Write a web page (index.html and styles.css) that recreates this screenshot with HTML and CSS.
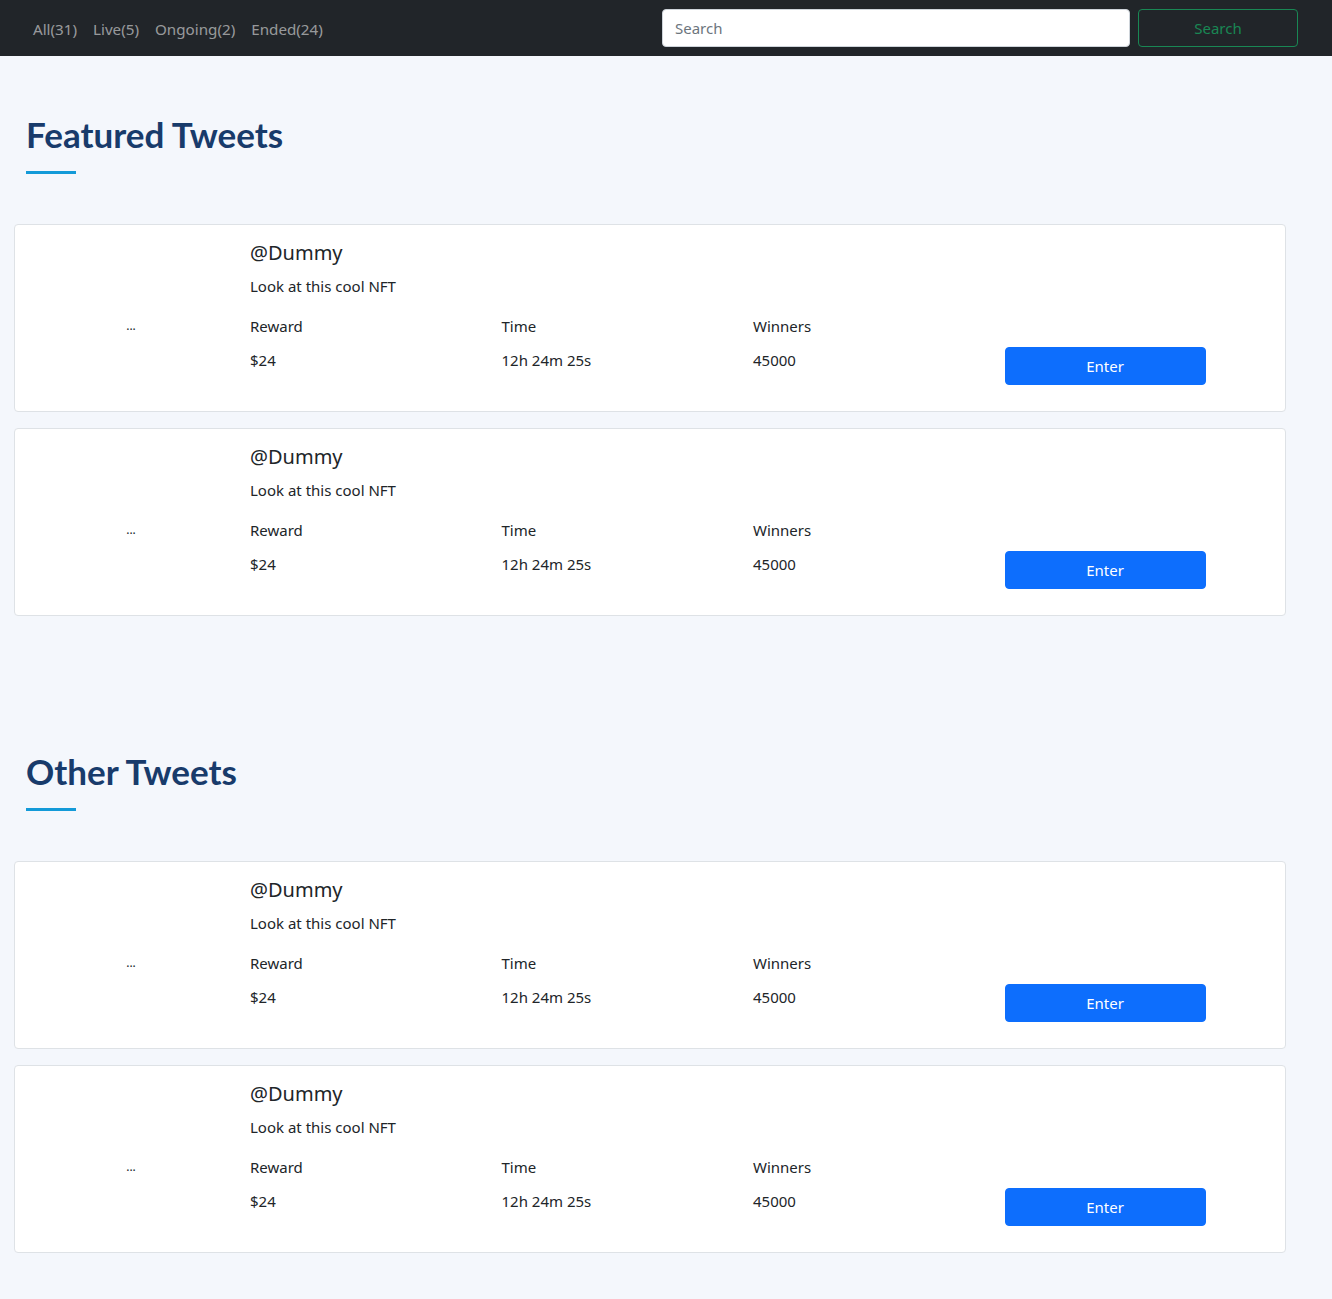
FILE: index.html
```html
<!DOCTYPE html>
<html lang="en">
<head>
<meta charset="utf-8">
<title>Tweets</title>
<link rel="stylesheet" href="styles.css">
</head>
<body>
<nav class="navbar">
  <ul class="nav-links">
    <li><a href="#">All(31)</a></li>
    <li><a href="#">Live(5)</a></li>
    <li><a href="#">Ongoing(2)</a></li>
    <li><a href="#">Ended(24)</a></li>
  </ul>
  <form class="search-form">
    <input class="search-input" type="search" placeholder="Search">
    <button class="search-btn" type="button">Search</button>
  </form>
</nav>

<main class="main">
  <section class="section">
    <h2 class="section-title">Featured Tweets</h2>
    <div class="title-line"></div>
    <div class="card-list">
      <div class="card">
        <div class="card-media">...</div>
        <div class="handle">@Dummy</div>
        <div class="desc">Look at this cool NFT</div>
        <div class="label">Reward</div><div class="label">Time</div><div class="label">Winners</div>
        <div class="value">$24</div><div class="value">12h 24m 25s</div><div class="value">45000</div>
        <button class="enter-btn" type="button">Enter</button>
      </div>
      <div class="card">
        <div class="card-media">...</div>
        <div class="handle">@Dummy</div>
        <div class="desc">Look at this cool NFT</div>
        <div class="label">Reward</div><div class="label">Time</div><div class="label">Winners</div>
        <div class="value">$24</div><div class="value">12h 24m 25s</div><div class="value">45000</div>
        <button class="enter-btn" type="button">Enter</button>
      </div>
    </div>
  </section>

  <section class="section">
    <h2 class="section-title">Other Tweets</h2>
    <div class="title-line"></div>
    <div class="card-list">
      <div class="card">
        <div class="card-media">...</div>
        <div class="handle">@Dummy</div>
        <div class="desc">Look at this cool NFT</div>
        <div class="label">Reward</div><div class="label">Time</div><div class="label">Winners</div>
        <div class="value">$24</div><div class="value">12h 24m 25s</div><div class="value">45000</div>
        <button class="enter-btn" type="button">Enter</button>
      </div>
      <div class="card">
        <div class="card-media">...</div>
        <div class="handle">@Dummy</div>
        <div class="desc">Look at this cool NFT</div>
        <div class="label">Reward</div><div class="label">Time</div><div class="label">Winners</div>
        <div class="value">$24</div><div class="value">12h 24m 25s</div><div class="value">45000</div>
        <button class="enter-btn" type="button">Enter</button>
      </div>
    </div>
  </section>
</main>
</body>
</html>
```

FILE: styles.css
```css
* { box-sizing: border-box; }

html, body {
  margin: 0;
  padding: 0;
}

body {
  background: #f4f7fc;
  font-family: "Noto Sans", "Open Sans", sans-serif;
  font-size: 15px;
  color: #212529;
}

.navbar {
  height: 56px;
  background: #212529;
  display: flex;
  align-items: center;
  justify-content: space-between;
  padding: 0 34px 0 25px;
}

.nav-links {
  list-style: none;
  margin: 0;
  padding: 2px 0 0 0;
  display: flex;
}

.nav-links a {
  display: block;
  padding: 8px 8px;
  color: rgba(255, 255, 255, 0.55);
  text-decoration: none;
  font-size: 15.2px;
  line-height: 24px;
}

.search-form {
  display: flex;
  gap: 8px;
}

.search-input {
  width: 468px;
  height: 38px;
  border: 1px solid #ced4da;
  border-radius: 4px;
  padding: 6px 12px;
  font-family: inherit;
  font-size: 15px;
  color: #212529;
  background: #fff;
}

.search-input::placeholder {
  color: #6c757d;
}

.search-btn {
  width: 160px;
  height: 38px;
  background: transparent;
  border: 1px solid #198754;
  border-radius: 4px;
  color: #198754;
  font-family: inherit;
  font-size: 15px;
}

.main {
  padding: 0 46px 30px 14px;
}

.section {
  padding-top: 56px;
  margin-bottom: 77px;
}

.section:last-child {
  margin-bottom: 0;
}

.section-title {
  margin: 0 0 0 12px;
  font-family: "Lato", "Inter", sans-serif;
  font-weight: 700;
  font-size: 35px;
  line-height: 44px;
  color: #183b6b;
}

.title-line {
  width: 50px;
  height: 3px;
  margin: 15px 0 0 12px;
  background: #139ad8;
}

.card-list {
  margin-top: 50px;
  display: flex;
  flex-direction: column;
  gap: 16px;
}

.card {
  background: #fff;
  border: 1px solid #dee2e6;
  border-radius: 4px;
  padding: 16px 29px 26px 0;
  display: grid;
  grid-template-columns: 235px repeat(4, 1fr);
  grid-template-rows: auto auto auto auto;
  align-items: start;
}

.card-media {
  grid-column: 1;
  grid-row: 3;
  margin-top: 16px;
  padding-right: 3px;
  text-align: center;
  font-size: 12px;
  line-height: 24px;
}

.handle {
  grid-column: 2 / 6;
  grid-row: 1;
  font-size: 20px;
  line-height: 24px;
}

.desc {
  grid-column: 2 / 6;
  grid-row: 2;
  margin-top: 9px;
  line-height: 24px;
}

.label {
  grid-row: 3;
  margin-top: 16px;
  line-height: 24px;
}

.label:nth-of-type(4) { grid-column: 2; }
.label:nth-of-type(5) { grid-column: 3; }
.label:nth-of-type(6) { grid-column: 4; }

.value {
  grid-row: 4;
  margin-top: 10px;
  line-height: 24px;
}

.value:nth-of-type(7) { grid-column: 2; }
.value:nth-of-type(8) { grid-column: 3; }
.value:nth-of-type(9) { grid-column: 4; }

.enter-btn {
  grid-column: 5;
  grid-row: 4;
  width: 80%;
  height: 38px;
  margin-top: 9px;
  background: #0d6efd;
  border: 1px solid #0d6efd;
  border-radius: 4px;
  color: #fff;
  font-family: inherit;
  font-size: 15px;
}
```
